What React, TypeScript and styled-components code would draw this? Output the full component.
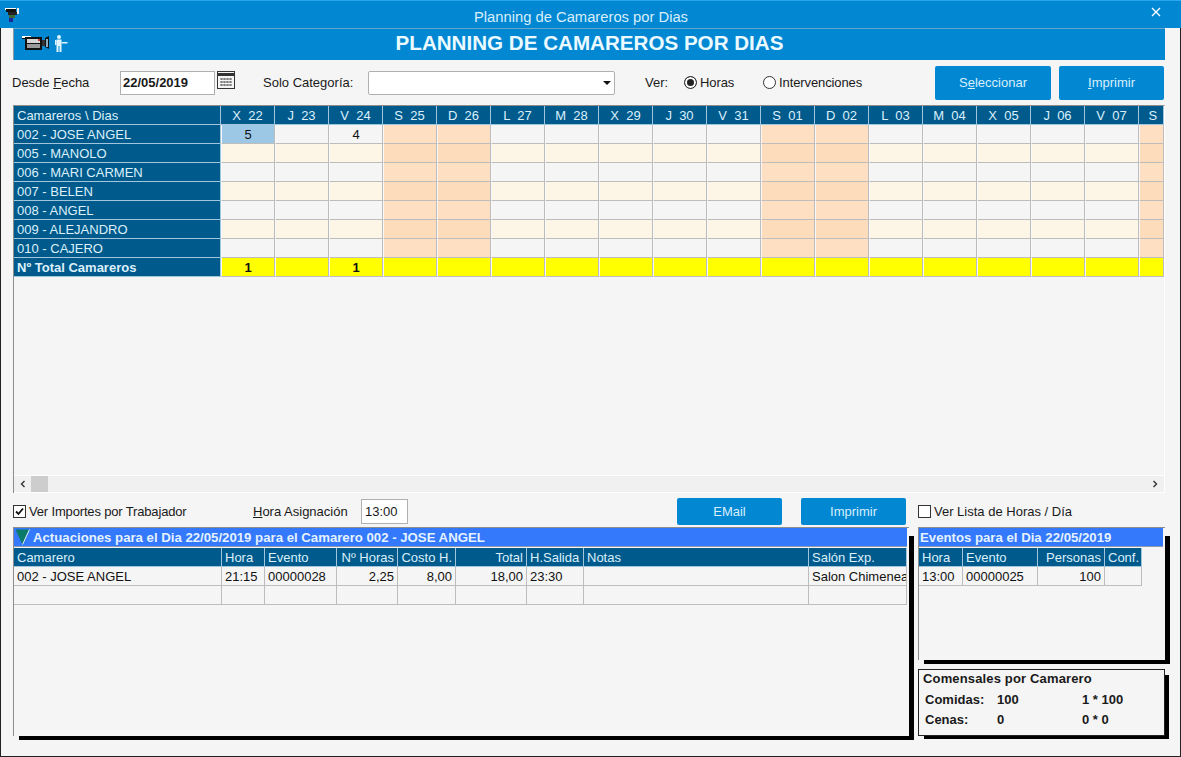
import React from 'react';
import styled, { createGlobalStyle } from 'styled-components';

type ColumnDef = {
    title: string,
    width: number,
    right?: boolean
};

const GlobalStyle = createGlobalStyle`
    html, body {
        margin: 0;
        padding: 0;
        background: #f5f5f5;
    }
    body {
        font-family: "Liberation Sans", Arial, sans-serif;
        font-size: 13px;
        color: #1a1a1a;
    }
`;

const Window = styled.div`
    width: 1181px;
    height: 757px;
    display: flex;
    flex-direction: column;
    overflow: hidden;
    box-sizing: border-box;
`;

const TitleBar = styled.div`
    position: relative;
    height: 28px;
    flex: none;
    box-sizing: border-box;
    display: flex;
    align-items: center;
    justify-content: center;
    padding: 5px 19px 0 0;
    background: #0288d3;
    border-top: 1px solid #2aa5ee;
    color: #d8eefb;
    font-size: 14.75px;
`;

const AppIcon = styled.svg`
    position: absolute;
    left: 5px;
    top: 6px;
`;

const CloseIcon = styled.svg`
    position: absolute;
    right: 20px;
    top: 6px;
`;

const Body = styled.div`
    flex: 1;
    box-sizing: border-box;
    display: flex;
    flex-direction: column;
    padding: 0 15px 0 12px;
    border: 1px solid #222;
    border-top: none;
    min-height: 0;
`;

const Banner = styled.div`
    position: relative;
    height: 32px;
    flex: none;
    box-sizing: border-box;
    display: flex;
    align-items: center;
    justify-content: center;
    padding-bottom: 4px;
    background: #0288d3;
    border-top: 1px solid #6aa6c8;
    border-left: 1px solid #8a9aa6;
    color: #eafaff;
    font-size: 20.6px;
    font-weight: bold;
`;

const BannerIcons = styled.div`
    position: absolute;
    left: 8px;
    top: 6px;
    display: flex;
    align-items: flex-start;
    gap: 4px;
`;

const Toolbar = styled.div`
    height: 45px;
    flex: none;
    display: flex;
    align-items: center;
    margin-left: -1px;
`;

const Label = styled.span<{ $width: number }>`
    flex: none;
    width: ${p => p.$width}px;
    white-space: nowrap;
`;

const DateInput = styled.div`
    width: 95px;
    height: 24px;
    flex: none;
    box-sizing: border-box;
    background: #fff;
    border: 1px solid #b0b0b0;
    padding-left: 2px;
    line-height: 22px;
    font-weight: bold;
    font-size: 13px;
`;

const CalendarIcon = styled.svg`
    flex: none;
    margin: -6px 28px 0 2px;
`;

const SelectBox = styled.div`
    width: 247px;
    height: 24px;
    flex: none;
    box-sizing: border-box;
    margin-right: 30px;
    background: #fff;
    border: 1px solid #b0b0b0;
    border-radius: 2px;
    display: flex;
    align-items: center;
    justify-content: flex-end;
    padding-right: 3px;
`;

const RadioOption = styled.div<{ $width: number }>`
    flex: none;
    width: ${p => p.$width}px;
    display: flex;
    align-items: center;
    gap: 3px;
    letter-spacing: -0.1px;
`;

const RadioDot = styled.span<{ $on?: boolean }>`
    width: 13px;
    height: 13px;
    flex: none;
    box-sizing: border-box;
    border: 1px solid #333;
    border-radius: 50%;
    background: ${p => p.$on ? '#222' : '#fff'};
    box-shadow: ${p => p.$on ? 'inset 0 0 0 2px #fff' : 'none'};
`;

const BlueButton = styled.div<{ $width: number, $height: number, $gap?: number }>`
    width: ${p => p.$width}px;
    height: ${p => p.$height}px;
    flex: none;
    box-sizing: border-box;
    margin-left: ${p => p.$gap || 0}px;
    display: flex;
    align-items: center;
    justify-content: center;
    background: #0288d3;
    border-radius: 2px;
    color: #d8eefb;
    font-size: 13px;
`;

const PlanningPanel = styled.div`
    height: 388px;
    flex: none;
    box-sizing: border-box;
    display: flex;
    flex-direction: column;
    border-top: 1px solid #8d8d8d;
    border-left: 1px solid #8d8d8d;
    border-right: 1px solid #fff;
    overflow: hidden;
`;

const PlanningGrid = styled.div`
    display: grid;
    grid-template-columns: 207px repeat(17, 54px) 25px;
    grid-auto-rows: 19px;
    flex: none;
    height: 171px;
`;

const HeadCell = styled.div<{ $left?: boolean }>`
    box-sizing: border-box;
    background: #005a8c;
    color: #dcf0fb;
    border-right: 1px solid #9fc6dd;
    border-bottom: 1px solid #9fc6dd;
    line-height: 20px;
    white-space: pre;
    overflow: hidden;
    text-align: ${p => p.$left ? 'left' : 'center'};
    padding-left: ${p => p.$left ? '3px' : '0'};
`;

const TotalLabel = styled(HeadCell)`
    font-weight: bold;
`;

const DayCell = styled.div<{ $bg: string, $bold?: boolean }>`
    box-sizing: border-box;
    background: ${p => p.$bg};
    border-right: 1px solid #bdbdbd;
    border-bottom: 1px solid #bdbdbd;
    border-left: 1px solid #f8f8f8;
    line-height: 20px;
    text-align: center;
    font-weight: ${p => p.$bold ? 'bold' : 'normal'};
    color: #111;
`;

const GridSpace = styled.div`
    flex: 1;
`;

const ScrollBar = styled.div`
    height: 16px;
    flex: none;
    background: #f0f0f0;
    border-top: 1px solid #fff;
    border-bottom: 1px solid #fff;
    display: flex;
    align-items: center;
    justify-content: space-between;
    padding: 0 5px;
    position: relative;
`;

const ScrollThumb = styled.div`
    position: absolute;
    left: 17px;
    top: 0;
    width: 17px;
    height: 16px;
    background: #cdcdcd;
`;

const OptionsRow = styled.div`
    height: 32px;
    flex: none;
    padding-top: 2px;
    display: flex;
    align-items: center;
`;

const CheckField = styled.div<{ $width: number, $gap?: number, $tight?: boolean }>`
    flex: none;
    width: ${p => p.$width}px;
    margin-left: ${p => p.$gap || 0}px;
    display: flex;
    align-items: center;
    gap: 3px;
    letter-spacing: ${p => p.$tight ? '-0.16px' : '0'};
`;

const CheckBox = styled.span`
    width: 13px;
    height: 13px;
    flex: none;
    box-sizing: border-box;
    border: 1px solid #333;
    background: #fff;
    display: flex;
    align-items: center;
    justify-content: center;
`;

const TimeInput = styled.div`
    width: 47px;
    height: 25px;
    flex: none;
    box-sizing: border-box;
    margin-right: 269px;
    background: #fff;
    border: 1px solid #b0b0b0;
    padding-left: 3px;
    line-height: 23px;
`;

const PanelsRow = styled.div`
    flex: 1;
    display: flex;
    gap: 9px;
    min-height: 0;
    isolation: isolate;
`;

// the black offset strip behind a panel starts lower than the panel itself
const ShadowPanel = styled.div<{ $width: number, $height: number }>`
    position: relative;
    width: ${p => p.$width}px;
    height: ${p => p.$height}px;
    flex: none;
    box-sizing: border-box;
    background: #f5f5f5;
    border-top: 1px solid #8d8d8d;
    border-left: 1px solid #8d8d8d;
    &::after {
        content: '';
        position: absolute;
        z-index: -1;
        left: 5px;
        top: 8px;
        right: -5px;
        bottom: -4px;
        background: #000;
    }
`;

const RightColumn = styled.div`
    width: 247px;
    flex: none;
    display: flex;
    flex-direction: column;
    gap: 9px;
`;

const PanelTitle = styled.div`
    height: 19px;
    box-sizing: border-box;
    display: flex;
    align-items: center;
    gap: 3px;
    margin-right: 2px;
    padding-left: 1px;
    background: #3478fb;
    border-bottom: 1px solid #8d9bb0;
    color: #e4f2ff;
    font-weight: bold;
    font-size: 13.2px;
    white-space: nowrap;
`;

const DataGrid = styled.div<{ $columns: string }>`
    display: grid;
    grid-template-columns: ${p => p.$columns};
    grid-auto-rows: 19px;
    margin-top: 1px;
    justify-content: start;
`;

const DataHead = styled.div<{ $right?: boolean }>`
    box-sizing: border-box;
    background: #005a8c;
    color: #dcf0fb;
    border-right: 1px solid #9fc6dd;
    border-bottom: 1px solid #9fc6dd;
    line-height: 19px;
    padding: 0 3px;
    white-space: nowrap;
    overflow: hidden;
    text-align: ${p => p.$right ? 'right' : 'left'};
`;

const DataCell = styled.div<{ $right?: boolean }>`
    box-sizing: border-box;
    border-right: 1px solid #bdbdbd;
    border-bottom: 1px solid #bdbdbd;
    line-height: 20px;
    padding: 0 3px;
    white-space: nowrap;
    overflow: hidden;
    color: #111;
    text-align: ${p => p.$right ? 'right' : 'left'};
`;

const ComensalesBox = styled.div`
    position: relative;
    height: 67px;
    flex: none;
    box-sizing: border-box;
    background: #f5f5f5;
    border: 1px solid #222;
    padding: 0 4px;
    font-weight: bold;
    &::after {
        content: '';
        position: absolute;
        z-index: -1;
        left: 5px;
        top: 5px;
        right: -5px;
        bottom: -4px;
        background: #000;
    }
`;

const ComensalesTitle = styled.div`
    height: 17px;
    line-height: 17px;
    margin-bottom: 3px;
    letter-spacing: 0.15px;
`;

const ComensalesGrid = styled.div`
    display: grid;
    grid-template-columns: 72px 85px auto;
    grid-auto-rows: 20px;
    line-height: 20px;
    padding-left: 2px;
`;

const days = ['X  22', 'J  23', 'V  24', 'S  25', 'D  26', 'L  27', 'M  28', 'X  29', 'J  30', 'V  31', 'S  01', 'D  02', 'L  03', 'M  04', 'X  05', 'J  06', 'V  07', ' S'];
const waiters = ['002 - JOSE ANGEL', '005 - MANOLO', '006 - MARI CARMEN', '007 - BELEN', '008 - ANGEL', '009 - ALEJANDRO', '010 - CAJERO'];

const actColumns: ColumnDef[] = [
    { title: 'Camarero', width: 208 },
    { title: 'Hora', width: 43 },
    { title: 'Evento', width: 72 },
    { title: 'Nº Horas', width: 61, right: true },
    { title: 'Costo H.', width: 58, right: true },
    { title: 'Total', width: 71, right: true },
    { title: 'H.Salida', width: 57 },
    { title: 'Notas', width: 225 },
    { title: 'Salón Exp.', width: 98 }
];
const actRows = [
    ['002 - JOSE ANGEL', '21:15', '00000028', '2,25', '8,00', '18,00', '23:30', '', 'Salon Chimenea'],
    ['', '', '', '', '', '', '', '', '']
];

const eventColumns: ColumnDef[] = [
    { title: 'Hora', width: 44 },
    { title: 'Evento', width: 75 },
    { title: 'Personas', width: 67, right: true },
    { title: 'Conf.', width: 37 }
];
const eventRows = [['13:00', '00000025', '100', '']];

const dayColor = (col: number, row: number) => {
    const weekend = col % 7 === 3 || col % 7 === 4;
    if (weekend) {
        return row % 2 === 0 ? '#fedfc2' : '#fddcbc';
    }
    return row % 2 === 0 ? '#f5f5f5' : '#fdf6e6';
};

const planningValues: Record<string, string> = { '0-0': '5', '0-2': '4' };

const columnsOf = (cols: ColumnDef[]) => cols.map(c => `${c.width}px`).join(' ');

const TableRows = ({ columns, rows }: { columns: ColumnDef[], rows: string[][] }) => (
    <DataGrid $columns={columnsOf(columns)}>
        {columns.map(c => <DataHead key={c.title} $right={c.right}>{c.title}</DataHead>)}
        {rows.map((row, r) => row.map((value, c) => (
            <DataCell key={`${r}-${c}`} $right={columns[c].right}>{value}</DataCell>
        )))}
    </DataGrid>
);

const Chevron = ({ left }: { left?: boolean }) => (
    <svg width="8" height="8" viewBox="0 0 8 8" fill="none" stroke="#333" strokeWidth="1.4">
        <path d={left ? 'M5.5 1 L2.5 4 L5.5 7' : 'M2.5 1 L5.5 4 L2.5 7'} />
    </svg>
);

const CameraIcon = () => (
    <svg width="28" height="16" viewBox="0 0 28 16">
        <rect x="0" y="1" width="9" height="2" fill="#fff" />
        <rect x="0" y="3" width="5" height="1" fill="#111" />
        <rect x="3" y="2" width="17" height="13" fill="#111" />
        <rect x="5" y="4" width="13" height="4" fill="#d6d6d6" />
        <rect x="5" y="9" width="13" height="4" fill="#9a9a9a" />
        <rect x="16" y="4" width="2" height="2" fill="#c23b3b" />
        <rect x="20" y="5" width="3" height="6" fill="#333" />
        <path d="M23 3 L27 1 L27 14 L23 12 Z" fill="#111" />
        <rect x="24" y="4" width="2" height="8" fill="#8fb0c4" />
    </svg>
);

const WaiterIcon = () => (
    <svg width="14" height="17" viewBox="0 0 14 17" fill="#dff6ff">
        <circle cx="5" cy="2" r="2" />
        <rect x="2.5" y="4.5" width="5" height="6.5" />
        <rect x="1" y="5" width="1.5" height="5" />
        <rect x="7.5" y="7" width="6" height="1.5" />
        <rect x="2.5" y="11" width="2" height="6" />
        <rect x="5.5" y="11" width="2" height="6" />
    </svg>
);

export default function App() {
    return (
        <Window>
            <GlobalStyle />
            <TitleBar>
                <AppIcon width="15" height="16" viewBox="0 0 15 16">
                    <rect x="0" y="1" width="11" height="2" fill="#fff" />
                    <rect x="1" y="2" width="10" height="3" fill="#111" />
                    <rect x="3" y="5" width="9" height="3" fill="#222" />
                    <rect x="12" y="1" width="2" height="6" fill="#eee" />
                    <rect x="4" y="8" width="6" height="3" fill="#3a6a3a" />
                    <rect x="4" y="11" width="4" height="4" fill="#1a2a9a" />
                </AppIcon>
                Planning de Camareros por Dias
                <CloseIcon width="10" height="10" viewBox="0 0 10 10" stroke="#fff" strokeWidth="1.3">
                    <path d="M1 1 L9 9 M9 1 L1 9" />
                </CloseIcon>
            </TitleBar>
            <Body>
                <Banner>
                    <BannerIcons>
                        <CameraIcon />
                        <WaiterIcon />
                    </BannerIcons>
                    PLANNING DE CAMAREROS POR DIAS
                </Banner>
                <Toolbar>
                    <Label $width={108}>Desde <u>F</u>echa</Label>
                    <DateInput>22/05/2019</DateInput>
                    <CalendarIcon width="18" height="18" viewBox="0 0 18 18">
                        <rect x="0.5" y="0.5" width="17" height="17" fill="#f5f5f5" stroke="#333" />
                        <rect x="0" y="2" width="18" height="3" fill="#333" />
                        <path d="M3 8 H15 M3 11 H15 M3 14 H15 M5 7 V16 M8 7 V16 M11 7 V16 M14 7 V16" stroke="#555" strokeWidth="1" strokeDasharray="2 1" />
                    </CalendarIcon>
                    <Label $width={105}>Solo Categoría:</Label>
                    <SelectBox>
                        <svg width="8" height="4" viewBox="0 0 8 4"><path d="M0 0 H8 L4 4 Z" fill="#111" /></svg>
                    </SelectBox>
                    <Label $width={39}>Ver:</Label>
                    <RadioOption $width={79}><RadioDot $on />Horas</RadioOption>
                    <RadioOption $width={172}><RadioDot />Intervenciones</RadioOption>
                    <BlueButton $width={116} $height={34}><span>S<u>e</u>leccionar</span></BlueButton>
                    <BlueButton $width={105} $height={34} $gap={8}><span><u>I</u>mprimir</span></BlueButton>
                </Toolbar>
                <PlanningPanel>
                    <PlanningGrid>
                        <HeadCell $left>Camareros \ Dias</HeadCell>
                        {days.map(d => <HeadCell key={d}>{d}</HeadCell>)}
                        {waiters.map((w, row) => (
                            <React.Fragment key={w}>
                                <HeadCell $left>{w}</HeadCell>
                                {days.map((_, col) => (
                                    <DayCell key={col} $bg={row === 0 && col === 0 ? '#9cc8e6' : dayColor(col, row)}>
                                        {planningValues[`${row}-${col}`]}
                                    </DayCell>
                                ))}
                            </React.Fragment>
                        ))}
                        <TotalLabel $left>Nº Total Camareros</TotalLabel>
                        {days.map((_, col) => (
                            <DayCell key={col} $bg="#ffff00" $bold>{col === 0 || col === 2 ? '1' : ''}</DayCell>
                        ))}
                    </PlanningGrid>
                    <GridSpace />
                    <ScrollBar>
                        <Chevron left />
                        <ScrollThumb />
                        <Chevron />
                    </ScrollBar>
                </PlanningPanel>
                <OptionsRow>
                    <CheckField $width={240} $tight>
                        <CheckBox>
                            <svg width="11" height="11" viewBox="0 0 11 11" fill="none" stroke="#111" strokeWidth="1.8">
                                <path d="M2 5.5 L4.5 8 L9 2.5" />
                            </svg>
                        </CheckBox>
                        Ver Importes por Trabajador
                    </CheckField>
                    <Label $width={108}><u>H</u>ora Asignación</Label>
                    <TimeInput>13:00</TimeInput>
                    <BlueButton $width={105} $height={27}>EMail</BlueButton>
                    <BlueButton $width={105} $height={27} $gap={19}>Imprimir</BlueButton>
                    <CheckField $width={200} $gap={12}>
                        <CheckBox />
                        Ver Lista de Horas / Día
                    </CheckField>
                </OptionsRow>
                <PanelsRow>
                    <ShadowPanel $width={896} $height={209}>
                        <PanelTitle>
                            <svg width="15" height="16" viewBox="0 0 15 16">
                                <path d="M0.5 0.5 H14.5 L7.5 15.5 Z" fill="#0b7a68" />
                                <path d="M14.5 0.5 L7.5 15.5" stroke="#e6f7ef" fill="none" />
                            </svg>
                            Actuaciones para el Dia 22/05/2019 para el Camarero 002 - JOSE ANGEL
                        </PanelTitle>
                        <TableRows columns={actColumns} rows={actRows} />
                    </ShadowPanel>
                    <RightColumn>
                        <ShadowPanel $width={247} $height={133}>
                            <PanelTitle>Eventos para el Dia 22/05/2019</PanelTitle>
                            <TableRows columns={eventColumns} rows={eventRows} />
                        </ShadowPanel>
                        <ComensalesBox>
                            <ComensalesTitle>Comensales por Camarero</ComensalesTitle>
                            <ComensalesGrid>
                                <span>Comidas:</span><span>100</span><span>1 * 100</span>
                                <span>Cenas:</span><span>0</span><span>0 * 0</span>
                            </ComensalesGrid>
                        </ComensalesBox>
                    </RightColumn>
                </PanelsRow>
            </Body>
        </Window>
    );
}
